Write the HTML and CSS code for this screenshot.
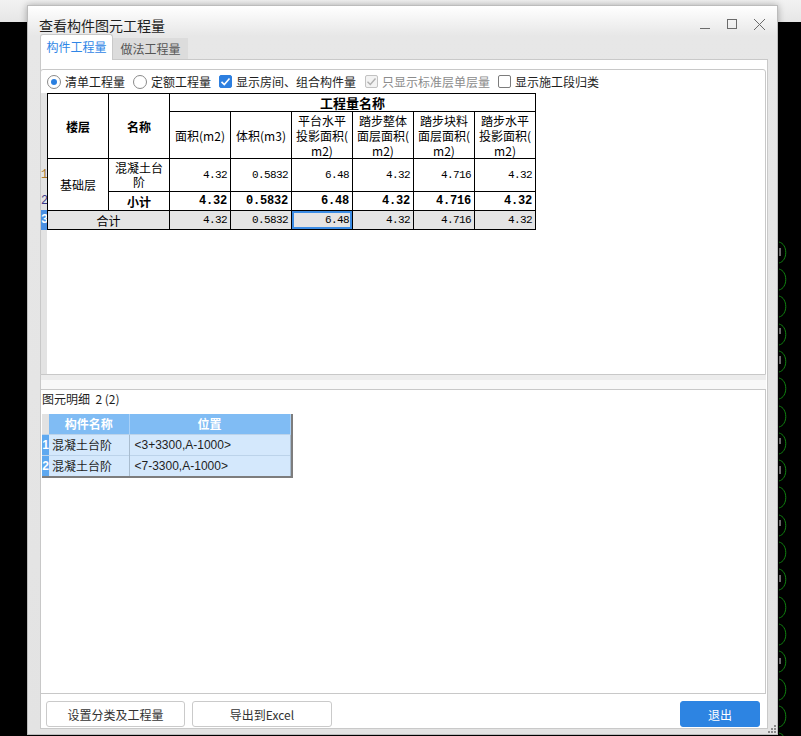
FILE: index.html
```html
<!DOCTYPE html>
<html lang="zh-CN">
<head>
<meta charset="utf-8">
<title>查看构件图元工程量</title>
<link rel="stylesheet" href="styles.css">
</head>
<body>
<div class="topstrip"></div>
<svg class="arcs" width="23" height="506" viewBox="0 0 23 506">
  <defs><path id="arc" d="M1,0 C10,2 10,19 1,21" fill="none" stroke="#128412" stroke-width="1"/></defs>
  <use href="#arc" y="12"/><use href="#arc" y="39"/><use href="#arc" y="66"/><use href="#arc" y="94"/>
  <use href="#arc" y="121"/><use href="#arc" y="148"/><use href="#arc" y="176"/><use href="#arc" y="203"/>
  <use href="#arc" y="230"/><use href="#arc" y="257"/><use href="#arc" y="285"/><use href="#arc" y="312"/>
  <use href="#arc" y="339"/><use href="#arc" y="367"/><use href="#arc" y="394"/><use href="#arc" y="421"/>
  <use href="#arc" y="449"/><use href="#arc" y="476"/><use href="#arc" y="503"/>
  <g stroke="#9a9a9a" stroke-width="1.5">
    <line x1="2" y1="18" x2="2" y2="26"/><line x1="2" y1="98" x2="2" y2="104"/><line x1="2" y1="126" x2="2" y2="134"/>
    <line x1="2" y1="208" x2="2" y2="214"/><line x1="2" y1="236" x2="2" y2="244"/><line x1="2" y1="290" x2="2" y2="296"/>
    <line x1="2" y1="345" x2="2" y2="352"/><line x1="2" y1="428" x2="2" y2="434"/>
  </g>
</svg>

<div class="window">
  <div class="titlebar">
    <span class="title">查看构件图元工程量</span>
    <svg class="controls" width="70" height="12" viewBox="0 0 70 12">
      <g stroke="#6b6b6b" stroke-width="1" fill="none">
        <line x1="2" y1="10.5" x2="12" y2="10.5"/>
        <rect x="29.5" y="1.5" width="9" height="9"/>
        <line x1="56" y1="1" x2="67" y2="12"/>
        <line x1="67" y1="1" x2="56" y2="12"/>
      </g>
    </svg>
  </div>

  <div class="tabs">
    <div class="tab active">构件工程量</div>
    <div class="tab">做法工程量</div>
  </div>

  <div class="panel">
    <div class="pane top-pane">
      <div class="options">
        <span class="opt"><span class="radio checked"></span>清单工程量</span>
        <span class="opt"><span class="radio"></span>定额工程量</span>
        <span class="opt wide"><span class="check on"><svg width="13" height="13" viewBox="0 0 13 13"><path d="M2.5,6.8 L5.3,9.5 L10.5,3.5" fill="none" stroke="#fff" stroke-width="1.6"/></svg></span>显示房间、组合构件量</span>
        <span class="opt disabled"><span class="check dis"><svg width="13" height="13" viewBox="0 0 13 13"><path d="M2.5,6.8 L5.3,9.5 L10.5,3.5" fill="none" stroke="#b0b0b0" stroke-width="1.4"/></svg></span>只显示标准层单层量</span>
        <span class="opt"><span class="check"></span>显示施工段归类</span>
      </div>
      <div class="grid-area">
        <div class="rowheads">
          <div class="rh rh-h"></div>
          <div class="rh rh-1"><span class="n1">1</span></div>
          <div class="rh rh-2"><span class="n2">2</span></div>
          <div class="rh rh-3 sel">3</div>
        </div>
        <table class="qty">
          <colgroup>
            <col class="c"><col class="c"><col class="c"><col class="c"><col class="c"><col class="c"><col class="c"><col class="c">
          </colgroup>
          <tr class="h1">
            <th rowspan="2" class="b">楼层</th>
            <th rowspan="2" class="b">名称</th>
            <th colspan="6" class="b big">工程量名称</th>
          </tr>
          <tr class="h2">
            <th class="n">面积(m2)</th>
            <th class="n">体积(m3)</th>
            <th class="n"><span class="ln">平台水平</span><span class="ln">投影面积(</span><span class="ln">m2)</span></th>
            <th class="n"><span class="ln">踏步整体</span><span class="ln">面层面积(</span><span class="ln">m2)</span></th>
            <th class="n"><span class="ln">踏步块料</span><span class="ln">面层面积(</span><span class="ln">m2)</span></th>
            <th class="n"><span class="ln">踏步水平</span><span class="ln">投影面积(</span><span class="ln">m2)</span></th>
          </tr>
          <tr class="r1">
            <td rowspan="2" class="ctr floor">基础层</td>
            <td class="ctr"><span class="ln">混凝土台</span><span class="ln">阶</span></td>
            <td class="num">4.32</td>
            <td class="num">0.5832</td>
            <td class="num">6.48</td>
            <td class="num">4.32</td>
            <td class="num">4.716</td>
            <td class="num">4.32</td>
          </tr>
          <tr class="r2">
            <td class="ctr bold">小计</td>
            <td class="num bnum">4.32</td>
            <td class="num bnum">0.5832</td>
            <td class="num bnum">6.48</td>
            <td class="num bnum">4.32</td>
            <td class="num bnum">4.716</td>
            <td class="num bnum">4.32</td>
          </tr>
          <tr class="r3">
            <td colspan="2" class="ctr">合计</td>
            <td class="num">4.32</td>
            <td class="num">0.5832</td>
            <td class="num selcell">6.48</td>
            <td class="num">4.32</td>
            <td class="num">4.716</td>
            <td class="num">4.32</td>
          </tr>
        </table>
      </div>
    </div>

    <div class="splitter"></div>

    <div class="pane bottom-pane">
      <div class="label">图元明细&nbsp; 2 (2)</div>
      <div class="detail-wrap">
        <table class="detail">
          <colgroup><col class="dc0"><col class="dc1"><col class="dc2"></colgroup>
          <tr class="dh">
            <th class="corner"></th>
            <th>构件名称</th>
            <th>位置</th>
          </tr>
          <tr>
            <td class="drh">1</td>
            <td>混凝土台阶</td>
            <td class="pos">&lt;3+3300,A-1000&gt;</td>
          </tr>
          <tr>
            <td class="drh">2</td>
            <td>混凝土台阶</td>
            <td class="pos">&lt;7-3300,A-1000&gt;</td>
          </tr>
        </table>
      </div>
    </div>

    <div class="buttons">
      <button class="btn b1">设置分类及工程量</button>
      <button class="btn b2">导出到Excel</button>
      <button class="btn exit">退出</button>
    </div>
  </div>

  <svg class="grip" width="8" height="8" viewBox="0 0 8 8">
    <g fill="#8a8a8a">
      <rect x="6" y="0" width="2" height="2"/>
      <rect x="3" y="3" width="2" height="2"/><rect x="6" y="3" width="2" height="2"/>
      <rect x="0" y="6" width="2" height="2"/><rect x="3" y="6" width="2" height="2"/><rect x="6" y="6" width="2" height="2"/>
    </g>
  </svg>
</div>
</body>
</html>
```

FILE: styles.css
```css
* { box-sizing: border-box; }
html, body { margin: 0; padding: 0; }
body {
  width: 801px;
  height: 736px;
  overflow: hidden;
  background: #000;
  position: relative;
  font-family: "Noto Sans CJK SC", "Microsoft YaHei", sans-serif;
  font-size: 12px;
  color: #222;
}
.topstrip {
  height: 22px;
  background: linear-gradient(#f2f2f2, #e6e6e6);
}
.arcs {
  position: absolute;
  left: 778px;
  top: 230px;
}
.window {
  position: absolute;
  left: 27px;
  top: 5px;
  width: 751px;
  height: 730px;
  border: 1px solid #bcbcbc;
  background: linear-gradient(#ffffff 0, #e7e7e7 30px, #e3e3e3 100%);
  box-shadow: 0 0 7px rgba(0, 0, 0, 0.3);
  padding: 0 9px 5px 12px;
  display: flex;
  flex-direction: column;
}
.titlebar {
  height: 28px;
  padding-top: 10px;
  display: flex;
  align-items: center;
  flex: none;
}
.title {
  font-size: 14px;
  line-height: 18px;
  color: #1f1f1f;
  margin-left: -1px;
}
.controls {
  margin-left: auto;
  margin-right: 0;
  margin-top: -2px;
}
.tabs {
  height: 25px;
  display: flex;
  align-items: flex-end;
  flex: none;
  position: relative;
  z-index: 2;
}
.tab {
  height: 21px;
  width: 75px;
  background: #dcdcdc;
  color: #555;
  text-align: center;
  line-height: 21px;
  font-size: 12px;
}
.tab.active {
  width: 73px;
  height: 26px;
  margin-bottom: -1px;
  background: #fff;
  color: #2f86e6;
  border: 1px solid #c9c9c9;
  border-bottom: none;
  border-radius: 3px 3px 0 0;
  line-height: 24px;
}
.panel {
  height: 670px;
  background: #fff;
  border: 1px solid #c9c9c9;
  padding: 9px 1px 0 0;
  display: flex;
  flex-direction: column;
  flex: none;
}
.pane {
  margin-left: -1px;
  border: 1px solid #c8c8c8;
  background: #fff;
  flex: none;
  display: flex;
  flex-direction: column;
}
.top-pane {
  height: 306px;
  border-radius: 3px 3px 0 0;
}
.options {
  height: 23px;
  display: flex;
  align-items: center;
  padding-left: 6px;
  flex: none;
  color: #1e1e1e;
}
.opt {
  display: flex;
  align-items: center;
  margin-right: 8px;
  line-height: 16px;
}
.opt.wide { margin-right: 9px; }
.opt.disabled { color: #8c8c8c; }
.radio {
  width: 14px;
  height: 14px;
  border: 1px solid #8a8a8a;
  border-radius: 50%;
  margin-right: 4px;
  display: flex;
  align-items: center;
  justify-content: center;
  background: #fff;
}
.radio.checked::after {
  content: "";
  width: 6px;
  height: 6px;
  border-radius: 50%;
  background: #2a7fe0;
}
.check {
  width: 13px;
  height: 13px;
  border: 1px solid #7c7c7c;
  border-radius: 2px;
  margin-right: 4px;
  background: #fff;
  display: flex;
  align-items: center;
  justify-content: center;
  position: relative;
}
.check svg { display: block; position: absolute; left: -1px; top: -1px; }
.check.on { background: #2d7fe0; border-color: #2d7fe0; }
.check.dis { background: #f3f3f3; border-color: #c2c2c2; }

.grid-area {
  flex: 1;
  display: flex;
  align-items: flex-start;
}
.rowheads {
  width: 6px;
  align-self: stretch;
  background: #e3e3e3;
  display: flex;
  flex-direction: column;
  overflow: hidden;
  font-family: "Liberation Mono", monospace;
  font-size: 12px;
}
.rh { flex: none; overflow: hidden; display: flex; align-items: center; padding-left: 0; }
.rh-h { height: 65px; }
.rh-1 { height: 33px; }
.rh-2 { height: 19px; }
.rh-3 { height: 20px; }
.n1 { color: #a8782c; }
.n2 { color: #3a3a8a; }
.rh.sel { background: #4a90e2; color: #fff; font-weight: bold; }

table { border-collapse: collapse; table-layout: fixed; }
.qty {
  width: 489px;
  border: 1px solid #000;
  color: #000;
}
.qty col.c { width: 61px; }
.qty th, .qty td {
  border: 1px solid #000;
  padding: 0 2px;
  overflow: hidden;
  white-space: nowrap;
}
.qty .h1 th { height: 18px; }
.qty .h2 th { height: 47px; }
.qty .r1 td { height: 33px; }
.qty .r2 td { height: 19px; }
.qty .r3 td { height: 19px; background: #e4e4e4; }
.qty th.b { font-weight: bold; font-size: 12px; }
.qty th.big { font-size: 13px; line-height: 16px; }
.qty th.n { font-weight: normal; font-size: 12px; line-height: 15px; }
.qty .ln {
  display: block;
  height: 15px;
  line-height: 15px;
}
.qty .r1 .ln { height: 14px; line-height: 14px; }
.qty .ctr { text-align: center; line-height: 15px; }
.qty .bold { font-weight: bold; }
.qty .num {
  text-align: right;
  padding-right: 3px;
  font-family: "Liberation Mono", monospace;
  font-size: 11px;
  letter-spacing: -0.6px;
}
.qty .num.bnum {
  font-weight: bold;
  font-size: 12px;
  letter-spacing: -0.2px;
}
.qty td.selcell { box-shadow: inset 0 0 0 2px #3b8ce4; }

.splitter {
  height: 14px;
  flex: none;
  background: linear-gradient(#ececec 0, #ececec 5px, #f8f8f8 5px);
}
.bottom-pane {
  height: 305px;
}
.label {
  height: 24px;
  padding: 1px 0 0 1px;
  line-height: 16px;
  font-size: 12px;
  color: #1e1e1e;
  flex: none;
}
.detail-wrap {
  margin-left: 1px;
  width: fit-content;
  border-right: 2px solid #7d7d7d;
  border-bottom: 2px solid #7d7d7d;
}
.detail { width: 248px; }
.detail col.dc0 { width: 7px; }
.detail col.dc1 { width: 80px; }
.detail col.dc2 { width: 161px; }
.detail th {
  height: 20px;
  background: #80bcf4;
  color: #fff;
  font-weight: bold;
  font-size: 12px;
  border-right: 1px solid #a9d1f8;
  padding: 0;
}
.detail th.corner { background: #e2e2e2; border-right: none; }
.detail td {
  height: 21px;
  background: #d4e8fc;
  border-top: 1px solid #bcd3ea;
  border-right: 1px solid #a8bccf;
  padding: 0 0 0 3px;
  color: #1e1e1e;
  white-space: nowrap;
}
.detail td.pos { padding-left: 5px; font-family: "Liberation Sans", sans-serif; }
.detail td.drh {
  background: #5fa9f0;
  color: #fff;
  font-weight: bold;
  padding: 0;
  text-align: center;
  border-right: none;
  overflow: hidden;
  font-family: "Liberation Sans", sans-serif;
}
.buttons {
  height: 34px;
  display: flex;
  align-items: flex-start;
  padding: 7px 6px 0 5px;
  flex: none;
}
.btn {
  height: 26px;
  border: 1px solid #cacaca;
  border-radius: 3px;
  background: #fff;
  font-family: "Noto Sans CJK SC", "Microsoft YaHei", sans-serif;
  font-size: 12px;
  color: #333;
  padding: 0;
}
.b1 { width: 139px; }
.b2 { width: 140px; margin-left: 7px; }
.exit {
  width: 80px;
  margin-left: auto;
  background: #2d84e2;
  border-color: #2d84e2;
  color: #fff;
}
.grip {
  position: absolute;
  right: 1px;
  bottom: 1px;
}
```
